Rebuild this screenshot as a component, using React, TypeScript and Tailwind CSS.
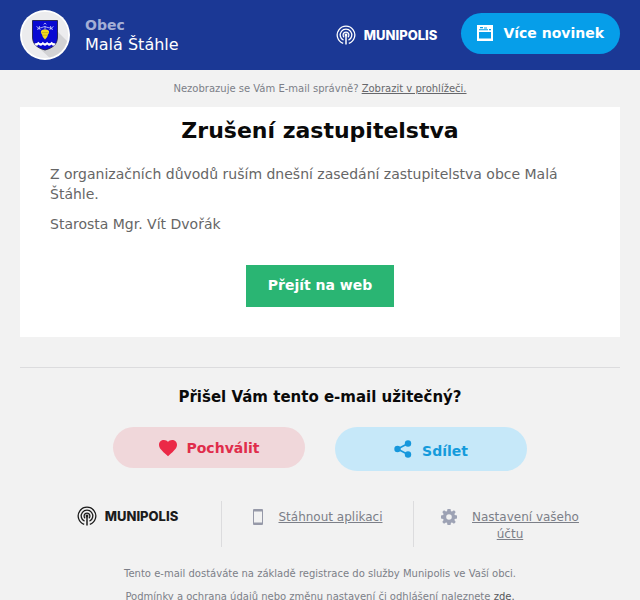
import React from "react";

function MunipolisLogo({ className }: { className: string }) {
  return (
    <a href="#munipolis" className={`flex items-center gap-2 ${className}`}>
      <svg className="size-5" viewBox="0 0 20 20" fill="none" stroke="currentColor" strokeWidth="1.3" aria-hidden="true">
        <path d="M7.200 18.300A8.800 8.800 0 1 1 12.800 18.300" />
        <path d="M7.500 15.200A5.800 5.800 0 1 1 12.500 15.200" />
        <path d="M8.200 12.300A2.900 2.900 0 1 1 11.800 12.300" />
        <circle cx="10" cy="10" r="1.400" fill="currentColor" stroke="none" />
        <path d="M10 10V19.500" strokeWidth="1.500" />
      </svg>
      <span className="font-[Inter,sans-serif] text-[13px] leading-5 font-extrabold">MUNIPOLIS</span>
    </a>
  );
}

function Crest() {
  return (
    <svg className="size-[50px]" viewBox="0 0 50 50" role="img" aria-label="Znak obce Malá Štáhle">
      <defs>
        <clipPath id="disc">
          <circle cx="25" cy="25" r="23" />
        </clipPath>
      </defs>
      <circle cx="25" cy="25" r="25" fill="#fff" />
      <circle cx="25" cy="25" r="23.2" fill="#ececee" />
      <path d="M38 22L50 34V50H32L18 37Z" fill="#d2d2d4" clipPath="url(#disc)" />
      <path d="M12.500 10.500H37.500V27C37.500 34 33 38 25 40C17 38 12.500 34 12.500 27Z" fill="#0909d2" stroke="#15153c" strokeWidth="0.8" />
      <path d="M14.500 33.500q2.800-.3 4-1.800q2.200 3 4.400 0q2.100 3 4.200 0q2.200 3 4.400 0q1.200 1.500 4 1.800q-.5 1.500-1.500 2.200q-1.800-.2-2.700-1.300q-2 2.600-4.200 0q-2.100 2.600-4.200 0q-2.200 2.600-4.200 0q-.9 1.100-2.700 1.300q-1-.7-1.500-2.200z" fill="#fff" />
      <path d="M21 21q1-2 4-1.500q3-.5 4 1.500q.5 2-1 3.500q-.4 3-3 5q-2.600-2-3-5q-1.500-1.500-1-3.500z" fill="#f3dc20" />
      <path d="M21.500 22.500h7M22.500 25.200h5" stroke="#b89c14" strokeWidth="0.600" />
      <path d="M25 19.500V16M23.800 14.500l1.200-1.500 1.200 1.500M16.500 16.500l4 3M17 19.500l3.500-2M19.500 16l-.5 3.500M33.500 16.500l-4 3M33 19.500l-3.500-2M30.500 16l.5 3.500M20.500 18l4-1.500 5 1.500" stroke="#cfd4fa" strokeWidth="0.8" fill="none" />
    </svg>
  );
}

export default function App() {
  return (
    <div className="bg-[#f2f2f2] font-['DejaVu_Sans',sans-serif] text-[#7c7f88]">
      <header className="flex h-[70px] items-center bg-[#1b3895] px-5">
        <Crest />
        <div className="ml-[15px] leading-5">
          <div className="text-[14px] font-bold text-[#a4afd5]">Obec</div>
          <div className="text-[16px] text-white">Malá Štáhle</div>
        </div>
        <MunipolisLogo className="ml-auto text-white" />
        <a href="#novinky" className="mb-1 ml-6 flex h-[41px] items-center gap-2.5 rounded-full bg-[#069ee9] px-4 text-[14px] leading-5 font-bold text-white">
          <svg className="size-4" viewBox="0 0 16 16" aria-hidden="true">
            <path fill="currentColor" fillRule="evenodd" d="M0 0H16V16H0ZM2 7V13.500H14V7ZM2 4.300V5.300H11V4.300ZM3 2V3.200H6V2ZM7 2.500V3.500H10V2.500ZM12 4V5.300H14V4Z" />
          </svg>
          Více novinek
        </a>
      </header>

      <div className="px-5">
        <p className="py-2.5 text-center text-[10px] leading-[17px]">
          Nezobrazuje se Vám E-mail správně?{" "}
          <a href="#prohlizec" className="text-[#66676b] underline">Zobrazit v prohlížeči.</a>
        </p>

        <main className="bg-white px-[30px] pt-2 pb-[30px] text-[14px] leading-5 text-[#666]">
          <h1 className="text-center text-[22px] leading-8 font-bold text-[#0a0a0a]">Zrušení zastupitelstva</h1>
          <p className="mt-[17px]">Z organizačních důvodů ruším dnešní zasedání zastupitelstva obce Malá Štáhle.</p>
          <p className="mt-2.5">Starosta Mgr. Vít Dvořák</p>
          <div className="mt-[31px] flex justify-center">
            <a href="#web" className="bg-[#2ab573] px-[22px] pt-2.5 pb-3 font-bold text-white">Přejít na web</a>
          </div>
        </main>

        <section className="mt-[30px] border-t border-[#dcdcde] pt-[18px]">
          <h2 className="text-center text-[15px] leading-[22px] font-bold text-[#0a0a0a]">Přišel Vám tento e-mail užitečný?</h2>
          <div className="mt-[19px] flex items-start justify-center gap-[30px] text-[14px] leading-5 font-bold">
            <button type="button" className="flex h-[41px] w-48 items-center justify-center gap-2 rounded-full bg-[#f0d7da] text-[#e02d4b]">
              <svg className="size-5" viewBox="0 0 20 20" aria-hidden="true">
                <path fill="#eb2947" d="M10 18.300L8.700 17.100C4 12.900 1 10.200 1 6.800C1 4 3.200 2 5.900 2C7.500 2 9 2.700 10 3.900C11 2.700 12.500 2 14.100 2C16.800 2 19 4 19 6.800C19 10.200 16 12.900 11.300 17.100Z" />
              </svg>
              Pochválit
            </button>
            <button type="button" className="flex h-11 w-48 items-center justify-center gap-2 rounded-full bg-[#c6e8f9] text-[#159bdc]">
              <svg className="size-5" viewBox="0 0 20 20" aria-hidden="true">
                <path d="M14 4.500L3.500 10L14 15.500" stroke="#1697dc" strokeWidth="1.600" fill="none" />
                <circle cx="14" cy="4.500" r="3.200" fill="#1697dc" />
                <circle cx="3.500" cy="10" r="3.200" fill="#1697dc" />
                <circle cx="14" cy="15.500" r="3.200" fill="#1697dc" />
              </svg>
              <span className="pt-1">Sdílet</span>
            </button>
          </div>
        </section>

        <footer className="pt-[30px] pb-5">
          <div className="flex justify-center pr-1 text-[12px] leading-[17px]">
            <div className="flex h-[46px] w-48 justify-center border-r border-[#dcdcde] pt-[5px] pl-1">
              <MunipolisLogo className="h-5 text-[#1c1c1c]" />
            </div>
            <div className="flex h-[46px] w-48 justify-center gap-3.5 border-r border-[#dcdcde] pt-2">
              <svg className="h-4 w-3" viewBox="0 0 12 16" aria-hidden="true">
                <path fill="#9699a8" fillRule="evenodd" d="M2 0H10Q11 0 11 1V15Q11 16 10 16H2Q1 16 1 15V1Q1 0 2 0ZM2 2.500V13.500H10V2.500Z" />
              </svg>
              <a href="#aplikace" className="underline">Stáhnout aplikaci</a>
            </div>
            <div className="h-[46px] w-48 px-5 pt-2 text-center">
              <svg className="mr-[15px] inline-block size-4 align-top" viewBox="0 0 16 16" aria-hidden="true">
                <path fill="#9da2b4" fillRule="evenodd" d="M6.500 0h3l.5 2.200 1 .4L13 1.300 14.700 3l-1.300 2 .4 1 2.200.5v3l-2.200.5-.4 1 1.300 2-1.700 1.700-2-1.300-1 .4-.5 2.200h-3L6 13.800l-1-.4-2 1.300L1.300 13l1.300-2-.4-1L0 9.500v-3L2.200 6l.4-1-1.300-2L3 1.300l2 1.300 1-.4ZM8 5.200A2.800 2.800 0 1 0 8 10.800A2.800 2.800 0 1 0 8 5.200Z" />
              </svg>
              <a href="#nastaveni" className="underline">Nastavení vašeho účtu</a>
            </div>
          </div>
          <div className="mt-[15px] text-center text-[10px] leading-[23px]">
            <p>Tento e-mail dostáváte na základě registrace do služby Munipolis ve Vaší obci.</p>
            <p>
              Podmínky a ochrana údajů nebo změnu nastavení či odhlášení naleznete{" "}
              <a href="#podminky" className="text-[#55565a]">zde.</a>
            </p>
          </div>
        </footer>
      </div>
    </div>
  );
}
